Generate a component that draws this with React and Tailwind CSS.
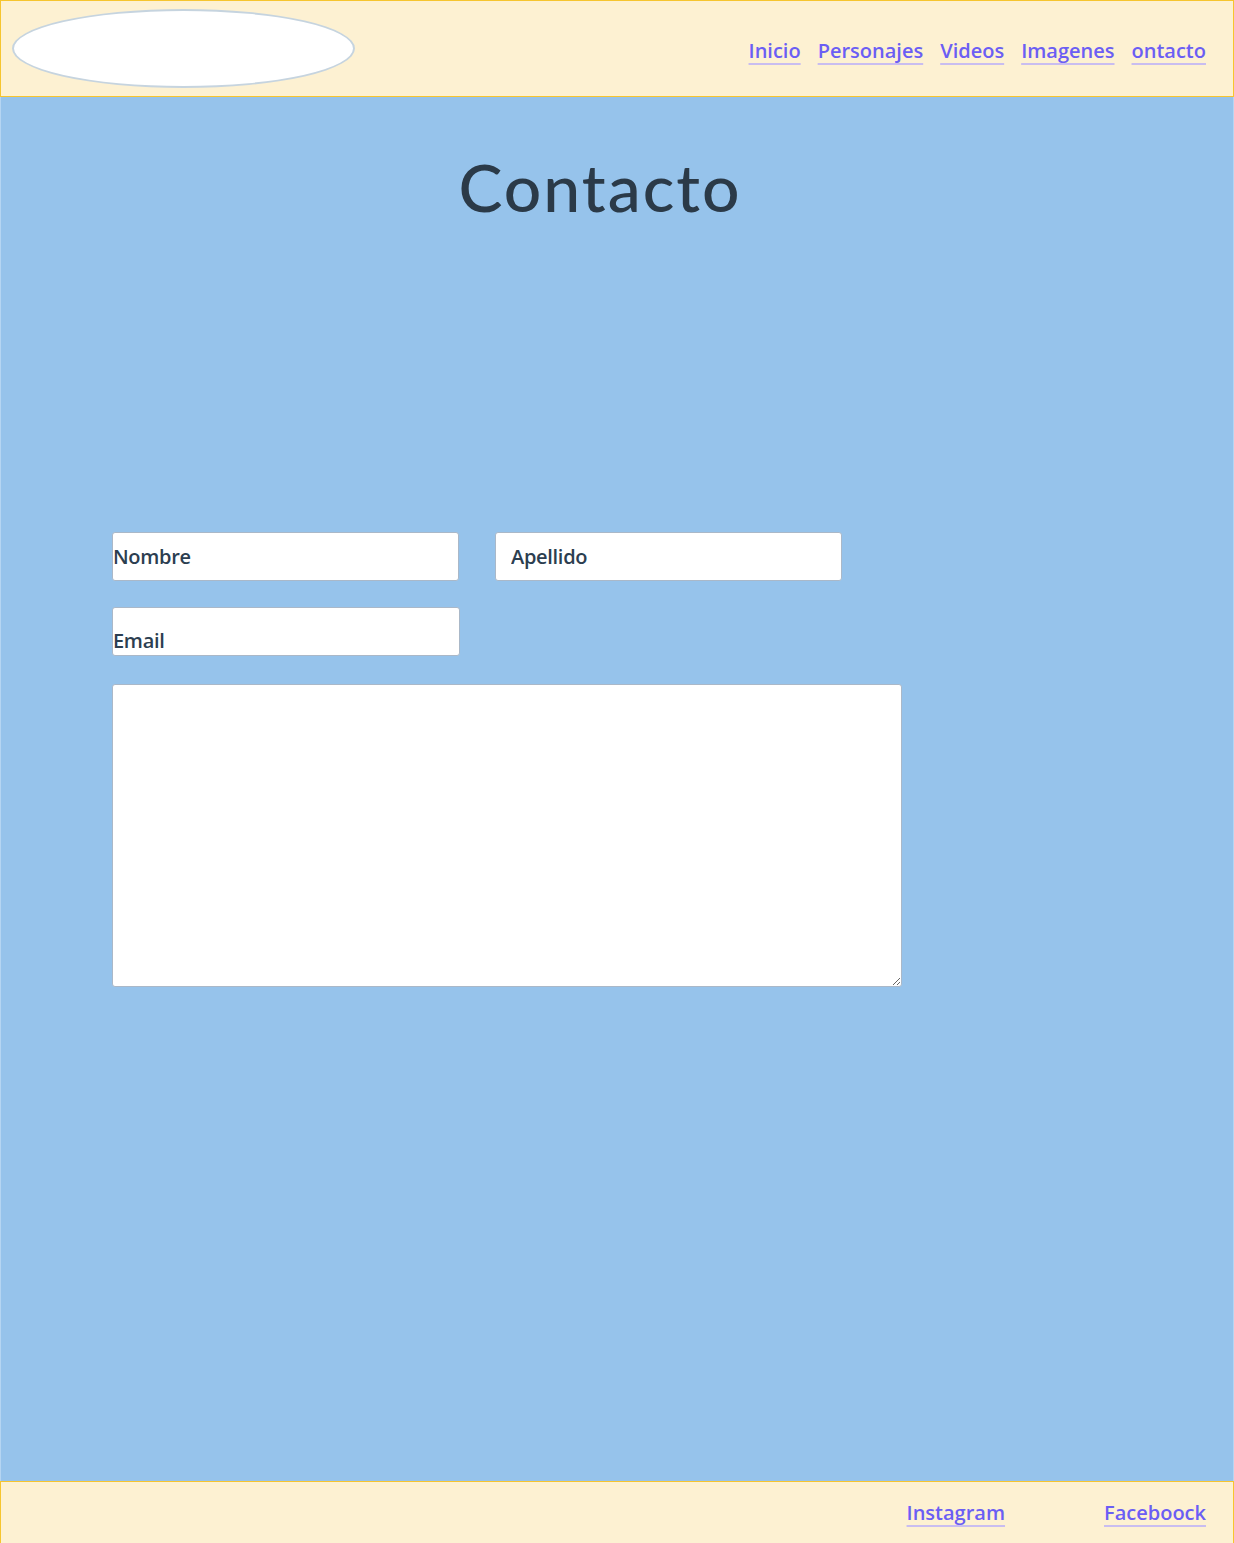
export default function App() {
  const links = ["Inicio", "Personajes", "Videos", "Imagenes", "ontacto"];
  const linkCls =
    "text-[20px] font-semibold text-[#6b5ef4] underline decoration-[#c9bdf0] decoration-2 underline-offset-[5px]";

  return (
    <div className="min-h-screen bg-[#96c3eb] font-['Open_Sans',sans-serif]">
      <header className="flex h-[97px] items-center justify-between border border-[#f6c52f] bg-[#fdf1d2] pl-[11px] pr-[27px]">
        <div className="h-[79px] w-[343px] rounded-[50%] border-2 border-[#c6d4df] bg-white" />
        <nav className="mt-[5px] flex gap-[17px]">
          {links.map((l) => (
            <a key={l} href="#" className={linkCls}>
              {l}
            </a>
          ))}
        </nav>
      </header>

      <main className="h-[1384px] border-x border-[#b5d5f2] pt-[57px]">
        <h1 className="pr-[34px] text-center font-['Lato',sans-serif] text-[66px] font-medium leading-none tracking-[2px] text-[#2b3a48]">
          Contacto
        </h1>

        <form className="mt-[312px] flex flex-col pl-[111px] text-[20px] font-semibold text-[#2c3e50]">
          <div className="flex gap-[36px]">
            <input
              placeholder="Nombre"
              className="h-[49px] w-[347px] rounded-[3px] border border-[#aab8c8] bg-white px-0 tracking-[-0.3px] placeholder:text-[#2c3e50]"
            />
            <input
              placeholder="Apellido"
              className="h-[49px] w-[347px] rounded-[3px] border border-[#aab8c8] bg-white px-[15px] tracking-[-0.3px] placeholder:text-[#2c3e50]"
            />
          </div>
          <input
            placeholder="Email"
            className="mt-[26px] h-[49px] w-[348px] rounded-[3px] border border-[#aab8c8] bg-white px-0 pt-[18px] tracking-[-0.3px] placeholder:text-[#2c3e50]"
          />
          <textarea className="mt-[28px] h-[303px] w-[790px] rounded-[3px] border border-[#aab8c8] bg-white" />
        </form>
      </main>

      <footer className="flex h-[70px] justify-end gap-[99px] border border-[#f6c52f] bg-[#fdf1d2] pr-[27px] pt-[16px]">
        <a href="#" className={linkCls}>
          Instagram
        </a>
        <a href="#" className={linkCls}>
          Faceboock
        </a>
      </footer>
    </div>
  );
}
